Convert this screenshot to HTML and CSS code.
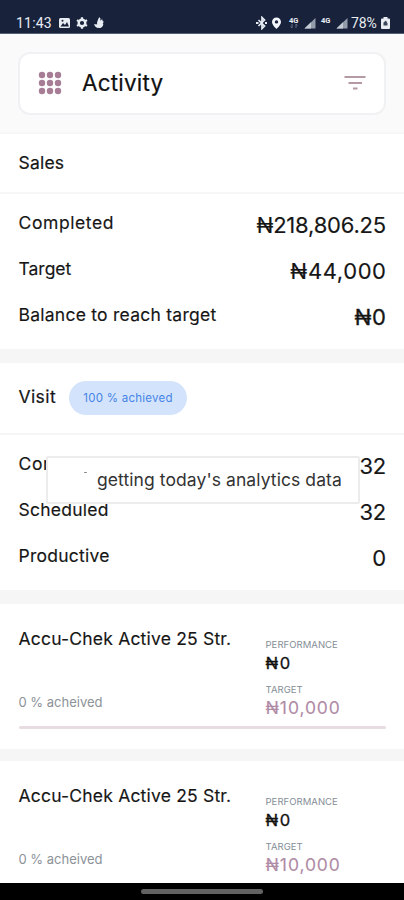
FILE: index.html
```
<!DOCTYPE html>
<html lang="en">
<head>
<meta charset="utf-8">
<title>Activity</title>
<link rel="stylesheet" href="styles.css">
</head>
<body>
<header class="status">
  <span class="clock">11:43</span>
  <svg class="left-icons" width="48" height="12" viewBox="0 0 48 12">
    <rect x="1" y="1" width="11" height="10" rx="1.5" fill="#e8edf3"/><path d="M2.500 9.500 5 6l2 2 2-3 2 4.500z" fill="#18223b"/><circle cx="4.500" cy="3.700" r="1" fill="#18223b"/>
    <circle cx="24" cy="6" r="3.300" fill="none" stroke="#e8edf3" stroke-width="2.400"/><path d="M24 .2v2M24 9.800v2M19 3.100l1.700 1M27.300 7.900l1.700 1M19 8.900l1.700-1M27.300 4.100l1.700-1" stroke="#e8edf3" stroke-width="2.200"/>
    <path d="M41 .5c2 0 1.500 2 1 3.500 1.500-2 3-2 2.500 0 1.800.2 1 1.800.2 2.200 1.500.8 0 4.800-3.700 4.800-3 0-4.700-2-4.800-4 2 .3 2 .5 3 .3C38.500 5.500 40 3 41 .5z" fill="#e8edf3"/>
  </svg>
  <svg class="right-icons" width="94" height="14" viewBox="0 0 94 14">
    <path d="m2.500 4 6 6-2.500 2.500v-11L8.500 4l-6 6" fill="none" stroke="#e8edf3" stroke-width="1.700"/><path d="M0 7h2.500M9 7h2" stroke="#e8edf3" stroke-width="2"/>
    <path fill-rule="evenodd" d="M20.500 1.500a4.500 4.500 0 0 0-4.500 4.500c0 3 4.500 7 4.500 7s4.500-4 4.500-7a4.500 4.500 0 0 0-4.500-4.500zm0 2.700a1.700 1.700 0 1 1 0 3.400 1.700 1.700 0 0 1 0-3.400z" fill="#f3f6fa"/>
    <text x="33" y="6.500" class="net">4G</text><path d="M36 8v4M34.500 10.500l1.500 1.500M40 12V8l1.500 1.500" fill="none" stroke="#66728a"/>
    <path d="M48.500 12.500h11V2z" fill="#939cab"/><path d="M48.500 12.500H55V6.300z" fill="#c6ccd5"/>
    <text x="65" y="6.500" class="net">4G</text>
    <path d="M80.500 12.500h11V2z" fill="#939cab"/><path d="M80.500 12.500H87V6.300z" fill="#c6ccd5"/>
  </svg>
  <span class="charge">78%</span>
  <svg class="battery" width="9" height="12" viewBox="0 0 9 12"><path d="M2.500 0h4v1.500H8q1 0 1 1V11q0 1-1 1H1q-1 0-1-1V2.500q0-1 1-1h1.500z" fill="#e8edf3"/><path d="M2.500 5.500 5 3.500l1.500 3v2h-4z" fill="#3c475c"/></svg>
</header>

<div class="top">
  <div class="bar">
    <svg class="grid-icon" width="24" height="24" viewBox="0 0 24 24" fill="#a77d96">
      <circle cx="4" cy="4" r="3.200"/><circle cx="12" cy="4" r="3.200"/><circle cx="20" cy="4" r="3.200"/>
      <circle cx="4" cy="12" r="3.200"/><circle cx="12" cy="12" r="3.200"/><circle cx="20" cy="12" r="3.200"/>
      <circle cx="4" cy="20" r="3.200"/><circle cx="12" cy="20" r="3.200"/><circle cx="20" cy="20" r="3.200"/>
    </svg>
    <h1>Activity</h1>
    <svg class="filter" width="22" height="16" viewBox="0 0 22 16" fill="none" stroke="#b39aa4" stroke-width="2.200"><path d="M.5 2h21M4.500 8H18M9 13.500h4.500"/></svg>
  </div>
</div>

<section>
  <div class="head sales"><h2>Sales</h2></div>
  <div class="rows">
    <div class="row"><span class="label completed">Completed</span><span class="value long">₦218,806.25</span></div>
    <div class="row"><span class="label target">Target</span><span class="value mid">₦44,000</span></div>
    <div class="row"><span class="label">Balance to reach target</span><span class="value bold">₦0</span></div>
  </div>
</section>

<section class="visits">
  <div class="head visit"><h2>Visit</h2><span class="pill">100 % achieved</span></div>
  <div class="rows">
    <div class="row"><span class="label completed">Completed</span><span class="value">32</span></div>
    <div class="row"><span class="label">Scheduled</span><span class="value">32</span></div>
    <div class="row"><span class="label">Productive</span><span class="value">0</span></div>
  </div>
  <div class="toast"><i class="spinner"></i>getting today's analytics data</div>
</section>

<article class="product">
  <div class="info">
    <div class="desc"><h3>Accu-Chek Active 25 Str.</h3><p>0 % acheived</p></div>
    <dl><dt>PERFORMANCE</dt><dd>₦0</dd><dt class="goal">TARGET</dt><dd class="amount">₦10,000</dd></dl>
  </div>
  <div class="track"></div>
</article>
<article class="product">
  <div class="info">
    <div class="desc"><h3>Accu-Chek Active 25 Str.</h3><p>0 % acheived</p></div>
    <dl><dt>PERFORMANCE</dt><dd>₦0</dd><dt class="goal">TARGET</dt><dd class="amount">₦10,000</dd></dl>
  </div>
</article>
<footer class="nav"><div class="handle"></div></footer>
</body>
</html>
```
FILE: styles.css
```
* { box-sizing: border-box; }
body { margin: 0; width: 404px; height: 900px; overflow: hidden; display: flex; flex-direction: column; background: #f6f6f6; color: #161616; font-family: Inter, "Liberation Sans", sans-serif; }
h1, h2, h3, p, dl, dd { margin: 0; font-weight: 400; }
section, article, header, footer, .top { flex: none; }
.status { height: 34px; padding: 13px 14px 0 16px; display: flex; align-items: flex-start; background: #18223b; border-bottom: 1px solid #526078; color: #e8edf3; font: 14px/20px Roboto, sans-serif; }
.clock { width: 42px; letter-spacing: .2px; }
.left-icons { margin-top: 4px; }
.right-icons { margin: 3px 1px 0 auto; }
.net { font: bold 7.500px Roboto, sans-serif; fill: #e8edf3; }
.charge { letter-spacing: -.1px; width: 30px; }
.battery { margin-top: 4px; }
.top { height: 100px; padding: 18px 18px 0; background: #fafafa; border-bottom: 2px solid #f6f6f6; }
.bar { height: 63px; border: 2px solid #f0f1f3; border-radius: 12px; background: #fff; display: flex; align-items: center; padding: 0 18px 2px 18px; }
.bar h1 { font-size: 22.500px; line-height: 30px; color: #111; margin-left: 20px; letter-spacing: .2px; -webkit-text-stroke: .2px; }
.filter { margin-left: auto; }
section { position: relative; background: #fff; margin-bottom: 14px; }
.head { display: flex; align-items: center; padding: 0 18px 0 18.500px; border-bottom: 2px solid #f6f6f6; }
.head h2 { font-size: 17.500px; line-height: 24px; letter-spacing: .2px; -webkit-text-stroke: .2px; }
.sales { height: 60px; }
.visit { height: 72px; padding-bottom: 2px; }
.visit h2 { width: 50.500px; letter-spacing: .4px; }
.pill { height: 34px; width: 118px; margin-top: 1px; border-radius: 17px; background: #d3e3fc; color: #4585e5; font-size: 11.500px; line-height: 35px; text-align: center; letter-spacing: .25px; }
.rows { padding: 6px 18px 11px 18.500px; }
.row { height: 46px; display: flex; justify-content: space-between; align-items: center; }
.label { font-size: 17.500px; line-height: 24px; letter-spacing: .25px; -webkit-text-stroke: .15px; }
.completed { letter-spacing: .6px; }
.target { letter-spacing: 0; }
.value { font-size: 22px; line-height: 28px; padding-top: 3px; letter-spacing: -.2px; -webkit-text-stroke: .15px; }
.mid { letter-spacing: .6px; margin-right: -.6px; }
.bold { letter-spacing: .8px; margin-right: -.8px; -webkit-text-stroke: .3px; }
.toast { position: absolute; left: 46px; top: 93px; width: 314px; height: 48px; padding-left: 49px; border: 2px solid #ececec; border-radius: 2px; background: #fff; color: #333; font-size: 17.500px; line-height: 43px; white-space: nowrap; letter-spacing: .08px; }
.spinner { position: absolute; left: 36px; top: 14px; width: 3px; height: 1px; border-radius: 1px; background: #888; }
.product { height: 145px; margin-bottom: 12px; background: #fff; padding: 22px 18px 0 18.500px; }
.info { display: flex; height: 100px; }
.desc { width: 247px; display: flex; flex-direction: column; }
.desc h3 { font-size: 17.500px; line-height: 25px; white-space: nowrap; letter-spacing: .2px; -webkit-text-stroke: .15px; }
.desc p { margin-top: 41px; font-size: 13px; line-height: 20px; color: #8b9298; }
dl { padding-top: 13px; }
dt { font-size: 9.500px; line-height: 12px; color: #858e96; letter-spacing: .05px; }
dd { font-size: 16.500px; line-height: 24px; color: #111; letter-spacing: 1.500px; -webkit-text-stroke: .3px; }
.goal { margin-top: 9px; }
.amount { color: #b08ba6; font-size: 17.500px; line-height: 24px; letter-spacing: .9px; -webkit-text-stroke: .1px; }
.track { height: 3px; background: #e6dce1; border-radius: 2px; }
.product + .product { height: 122px; margin: 0; overflow: hidden; }
.nav { height: 17px; background: #000; display: flex; justify-content: center; align-items: center; }
.handle { width: 122px; height: 5px; border-radius: 3px; background: #626262; }
```
